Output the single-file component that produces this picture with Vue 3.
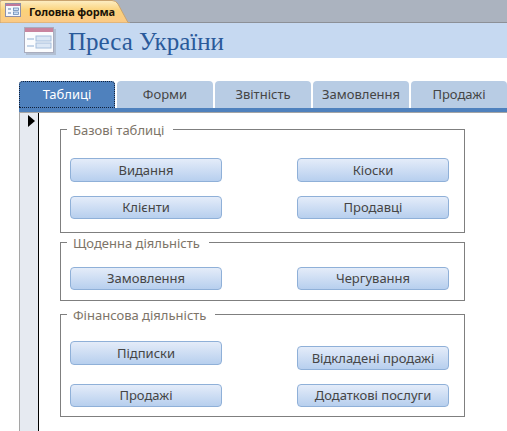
<template>
  <div class="window">
    <div class="doc-strip">
      <div class="doc-tab">
        <svg class="doc-tab-bg" width="130" height="23" viewBox="0 0 130 23">
          <defs>
            <linearGradient id="tabFill" x1="0" y1="0" x2="0" y2="1">
              <stop offset="0" stop-color="#fdeec4" />
              <stop offset="0.45" stop-color="#fbd27a" />
              <stop offset="1" stop-color="#fbc987" />
            </linearGradient>
          </defs>
          <path d="M0 23V2Q0 .5 2 .5H112Q116 .5 118 4L128 22.5H130V23Z" fill="url(#tabFill)" stroke="#c9a36e" stroke-width="1" />
        </svg>
        <svg class="form-icon-small" width="16" height="14" viewBox="0 0 16 14">
          <rect x=".5" y=".5" width="15" height="13" fill="#f6f8fc" stroke="#8d8fa8" />
          <rect x="1" y="1" width="14" height="2" fill="#c2789a" />
          <path d="M3 6h3M3 10h3" stroke="#5b7fae" />
          <rect x="8.5" y="5" width="5" height="2.5" fill="#cfe0f4" stroke="#5b7fae" stroke-width=".7" />
          <rect x="8.5" y="9" width="5" height="2.5" fill="#cfe0f4" stroke="#5b7fae" stroke-width=".7" />
        </svg>
        <span class="doc-tab-label">Головна форма</span>
      </div>
    </div>

    <header class="title-band">
      <svg class="form-icon" width="32" height="28" viewBox="0 0 32 28">
        <rect x="2" y="2" width="30" height="26" fill="#9a9fac" opacity=".45" />
        <rect x=".5" y=".5" width="29" height="25" fill="#fbfcfe" stroke="#a9acbd" />
        <rect x="1" y="1" width="28" height="4" fill="#c9849f" />
        <path d="M3 12h7M3 19h7" stroke="#b4c8e2" stroke-width="1.5" />
        <rect x="12" y="9" width="15" height="5" fill="#dce7f5" stroke="#a6bedc" />
        <rect x="12" y="16" width="15" height="5" fill="#dce7f5" stroke="#a6bedc" />
      </svg>
      <h1 class="title">Преса України</h1>
    </header>

    <nav class="tabs">
      <div
        v-for="(tab, i) in tabs"
        :key="tab"
        class="tab"
        :class="{ active: i === 0 }"
      >{{ tab }}</div>
    </nav>
    <div class="tab-rule"></div>

    <div class="form-body">
      <div class="selector">
        <span class="selector-arrow"></span>
      </div>
      <div class="groups">
        <section
          v-for="group in groups"
          :key="group.title"
          class="group"
          :class="group.cls"
        >
          <span class="legend">{{ group.title }}</span>
          <button
            v-for="btn in group.buttons"
            :key="btn.label"
            class="form-btn"
            :class="btn.cls"
          >{{ btn.label }}</button>
        </section>
      </div>
    </div>
  </div>
</template>

<script setup>
const tabs = ['Таблиці', 'Форми', 'Звітність', 'Замовлення', 'Продажі']

const groups = [
  {
    title: 'Базові таблиці',
    cls: 'basic',
    buttons: [
      { label: 'Видання', cls: 'tall' },
      { label: 'Кіоски', cls: 'tall' },
      { label: 'Клієнти' },
      { label: 'Продавці' }
    ]
  },
  {
    title: 'Щоденна діяльність',
    cls: 'daily',
    buttons: [
      { label: 'Замовлення' },
      { label: 'Чергування' }
    ]
  },
  {
    title: 'Фінансова діяльність',
    cls: 'finance',
    buttons: [
      { label: 'Підписки', cls: 'tall' },
      { label: 'Відкладені продажі', cls: 'tall lower' },
      { label: 'Продажі' },
      { label: 'Додаткові послуги' }
    ]
  }
]
</script>

<style>
html,
body {
  margin: 0;
  background: #fff;
}
</style>

<style scoped>
.window {
  width: 507px;
  height: 431px;
  overflow: hidden;
  background: #fff;
  font-family: "Noto Sans", "Open Sans", sans-serif;
}

.doc-strip {
  height: 22px;
  background: #abb3bf;
  border-bottom: 1px solid #8c9097;
}

.doc-tab {
  position: relative;
  display: flex;
  align-items: center;
  width: 130px;
  height: 23px;
}

.doc-tab-bg {
  position: absolute;
  left: 0;
  top: 0;
}

.form-icon-small {
  position: relative;
  margin-left: 5px;
  margin-top: -3px;
}

.doc-tab-label {
  position: relative;
  margin-left: 8px;
  margin-top: -1px;
  font-size: 11px;
  font-weight: 700;
  letter-spacing: -0.15px;
  color: #1a1208;
  white-space: nowrap;
}

.title-band {
  display: flex;
  align-items: center;
  height: 35px;
  padding-left: 24px;
  background: #c6d9f1;
}

.form-icon {
  flex: none;
  margin-top: 1px;
}

.title {
  margin: 2px 0 0 12px;
  font-family: "Liberation Serif", serif;
  font-size: 25px;
  font-weight: 400;
  color: #2a5a9a;
  white-space: nowrap;
}

.tabs {
  display: flex;
  gap: 2px;
  margin-top: 23px;
  padding-left: 19px;
}

.tab {
  flex: none;
  box-sizing: border-box;
  width: 96px;
  height: 27px;
  line-height: 26px;
  text-align: center;
  font-size: 13px;
  color: #454545;
  background: #b8cce4;
  border-radius: 4px 4px 0 0;
}

.tab.active {
  color: #fff;
  background: #4f81bd;
  outline: 1px dotted #10203a;
  outline-offset: -1px;
}

.tab-rule {
  height: 4px;
  background: #4f81bd;
  border-bottom: 1px solid #a5a5a5;
  margin-left: 19px;
}

.form-body {
  display: flex;
  margin-left: 19px;
  height: 320px;
}

.selector {
  flex: none;
  box-sizing: border-box;
  width: 20px;
  padding: 2px 0 0 8px;
  background: #e6eaf1;
  border-left: 1px solid #a5a5a5;
  border-right: 1px solid #000;
}

.selector-arrow {
  display: block;
  width: 0;
  height: 0;
  border-left: 7px solid #000;
  border-top: 6px solid transparent;
  border-bottom: 6px solid transparent;
}

.groups {
  padding: 16px 0 0 21px;
}

.group {
  position: relative;
  display: grid;
  grid-template-columns: 152px 152px;
  column-gap: 75px;
  align-items: start;
  align-content: start;
  box-sizing: border-box;
  width: 405px;
  padding-left: 9px;
  border: 1px solid #7f7f7f;
}

.group.basic {
  height: 104px;
  padding-top: 28px;
  row-gap: 14px;
}

.group.daily {
  height: 59px;
  margin-top: 9px;
  padding-top: 24px;
}

.group.finance {
  height: 103px;
  margin-top: 13px;
  padding-top: 26px;
  row-gap: 14px;
}

.legend {
  position: absolute;
  left: 6px;
  top: -7px;
  padding: 0 9px 0 6px;
  background: #fff;
  font-size: 13px;
  line-height: 15px;
  color: #7d7468;
  white-space: nowrap;
}

.form-btn {
  box-sizing: border-box;
  width: 152px;
  height: 23px;
  padding: 0 0 1px;
  font-family: inherit;
  font-size: 13px;
  color: #454545;
  background: linear-gradient(#e4ecf9, #b7cfee);
  border: 1px solid #8fb0d8;
  border-radius: 4px;
}

.form-btn.tall {
  height: 24px;
}

.form-btn.lower {
  margin-top: 5px;
}
</style>
